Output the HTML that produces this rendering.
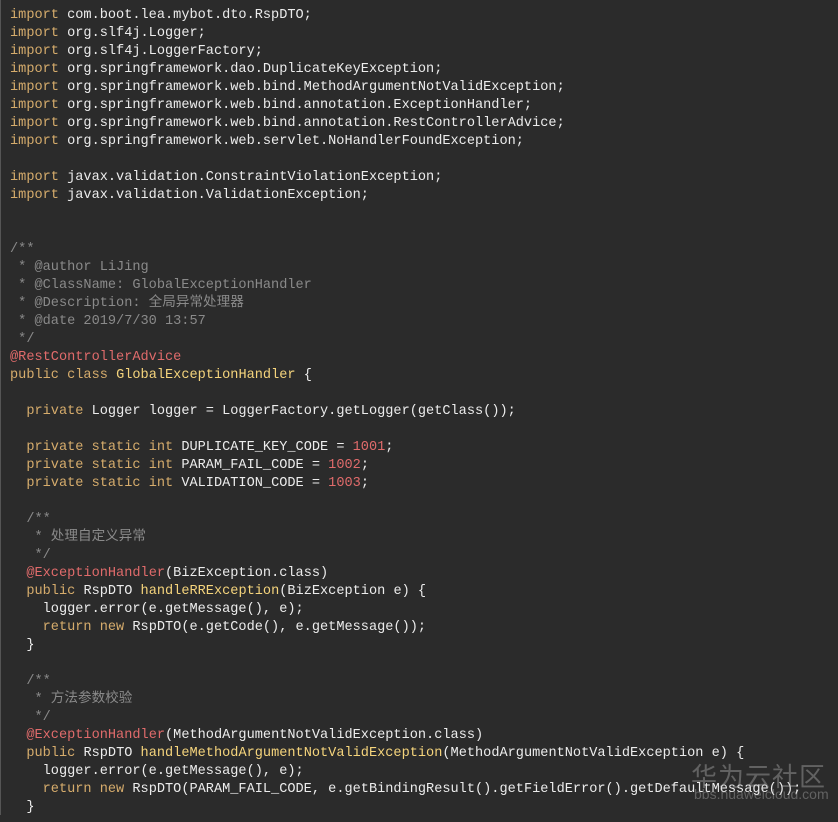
<!DOCTYPE html>
<html><head><meta charset="utf-8"><style>
html,body{margin:0;padding:0;background:#2b2b2b;width:838px;height:822px;overflow:hidden}
pre{margin:0;padding:7px 0 0 9px;font-family:"Liberation Mono","Noto Sans CJK SC",monospace;font-size:13.6px;line-height:18px;color:#ececec;white-space:pre;border-left:1px solid #555;height:815px;box-sizing:border-box}
.k{color:#d6ac6c}.a{color:#e06b6b}.c{color:#8a8a8a}.y{color:#f5d47c}.n{color:#e06b6b}
.wm{position:absolute;left:691px;top:757px;font-family:"Noto Sans CJK SC",sans-serif;font-size:26px;color:rgba(200,200,200,0.35);letter-spacing:1px}
.wm2{position:absolute;left:694px;top:786px;font-family:"Liberation Sans",sans-serif;font-size:14px;color:rgba(200,200,200,0.35)}
</style></head><body>
<pre><span class="k">import</span> com.boot.lea.mybot.dto.RspDTO;
<span class="k">import</span> org.slf4j.Logger;
<span class="k">import</span> org.slf4j.LoggerFactory;
<span class="k">import</span> org.springframework.dao.DuplicateKeyException;
<span class="k">import</span> org.springframework.web.bind.MethodArgumentNotValidException;
<span class="k">import</span> org.springframework.web.bind.annotation.ExceptionHandler;
<span class="k">import</span> org.springframework.web.bind.annotation.RestControllerAdvice;
<span class="k">import</span> org.springframework.web.servlet.NoHandlerFoundException;

<span class="k">import</span> javax.validation.ConstraintViolationException;
<span class="k">import</span> javax.validation.ValidationException;


<span class="c">/**
 * @author LiJing
 * @ClassName: GlobalExceptionHandler
 * @Description: 全局异常处理器
 * @date 2019/7/30 13:57
 */</span>
<span class="a">@RestControllerAdvice</span>
<span class="k">public class</span> <span class="y">GlobalExceptionHandler</span> {

  <span class="k">private</span> Logger logger = LoggerFactory.getLogger(getClass());

  <span class="k">private static int</span> DUPLICATE_KEY_CODE = <span class="n">1001</span>;
  <span class="k">private static int</span> PARAM_FAIL_CODE = <span class="n">1002</span>;
  <span class="k">private static int</span> VALIDATION_CODE = <span class="n">1003</span>;

  <span class="c">/**
   * 处理自定义异常
   */</span>
  <span class="a">@ExceptionHandler</span>(BizException.class)
  <span class="k">public</span> RspDTO <span class="y">handleRRException</span>(BizException e) {
    logger.error(e.getMessage(), e);
    <span class="k">return new</span> RspDTO(e.getCode(), e.getMessage());
  }

  <span class="c">/**
   * 方法参数校验
   */</span>
  <span class="a">@ExceptionHandler</span>(MethodArgumentNotValidException.class)
  <span class="k">public</span> RspDTO <span class="y">handleMethodArgumentNotValidException</span>(MethodArgumentNotValidException e) {
    logger.error(e.getMessage(), e);
    <span class="k">return new</span> RspDTO(PARAM_FAIL_CODE, e.getBindingResult().getFieldError().getDefaultMessage());
  }</pre>
<div class="wm">华为云社区</div>
<div class="wm2">bbs.huaweicloud.com</div>
</body></html>
